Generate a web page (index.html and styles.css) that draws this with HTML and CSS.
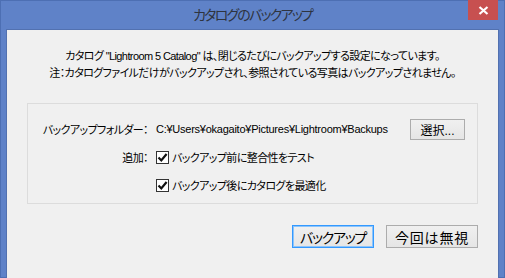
FILE: index.html
```html
<!DOCTYPE html>
<html lang="ja">
<head>
    <meta charset="UTF-8">
    <title>カタログのバックアップ</title>
    <link rel="stylesheet" href="styles.css">
</head>
<body>
    <div class="window">
        <div class="titlebar">カタログのバックアップ</div>
        <button class="close-btn" aria-label="閉じる">
            <svg width="11" height="9" viewBox="0 0 11 9">
                <path d="M1.5 1 L9.5 8 M9.5 1 L1.5 8" stroke="#fff" stroke-width="2.2" fill="none"/>
            </svg>
        </button>
        <div class="client">
            <p class="message">カタログ "Lightroom 5 Catalog" は、閉じるたびにバックアップする設定になっています。</p>
            <p class="message">注：カタログファイルだけがバックアップされ、参照されている写真はバックアップされません。</p>

            <div class="group">
                <div class="label">バックアップフォルダー：</div>
                <div class="path">C:¥Users¥okagaito¥Pictures¥Lightroom¥Backups</div>
                <button class="btn btn-small">選択...</button>

                <div class="label">追加：</div>
                <label class="check wide">
                    <span class="box">
                        <svg width="11" height="11" viewBox="0 0 11 11">
                            <path d="M1.5 5.5 L4.3 8.4 L9.6 2" stroke="#111" stroke-width="2.2" fill="none"/>
                        </svg>
                    </span>
                    バックアップ前に整合性をテスト
                </label>

                <div class="label"></div>
                <label class="check wide">
                    <span class="box">
                        <svg width="11" height="11" viewBox="0 0 11 11">
                            <path d="M1.5 5.5 L4.3 8.4 L9.6 2" stroke="#111" stroke-width="2.2" fill="none"/>
                        </svg>
                    </span>
                    バックアップ後にカタログを最適化
                </label>
            </div>

            <div class="actions">
                <button class="btn btn-default">バックアップ</button>
                <button class="btn btn-skip">今回は無視</button>
            </div>
        </div>
    </div>
</body>
</html>
```

FILE: styles.css
```css
body {
    margin: 0;
    font-family: "Liberation Sans", "Noto Sans CJK JP", sans-serif;
    font-feature-settings: "palt";
    background: #5f82c8;
}
.window {
    position: relative;
    width: 505px;
    height: 278px;
    box-sizing: border-box;
    border: 1px solid #4d6fb3;
    padding: 0 5px 6px 5px;
    background: #5f82c8;
}
.titlebar {
    height: 28px;
    line-height: 28px;
    text-align: center;
    font-size: 14px;
    letter-spacing: -1.8px;
    color: #2e3440;
}
.close-btn {
    position: absolute;
    top: -1px;
    right: 6px;
    width: 30px;
    height: 20px;
    padding: 0;
    border: none;
    background: #c75050;
    display: flex;
    align-items: center;
    justify-content: center;
}
.client {
    height: 240px;
    border: 1px solid #5271b0;
    background: #f0f0f0;
    padding: 18px 20px 0 20px;
    color: #000;
}
.message {
    margin: 0;
    font-size: 11px;
    letter-spacing: -0.6px;
    line-height: 17px;
    text-align: center;
    white-space: nowrap;
}
.group {
    margin-top: 21px;
    border: 1px solid #dcdcdc;
    padding: 14px 12px 7px 0;
    display: grid;
    grid-template-columns: 120px 1fr auto;
    grid-auto-rows: 22px;
    column-gap: 8px;
    row-gap: 6px;
    align-items: center;
    font-size: 11px;
    letter-spacing: -0.6px;
}
.label {
    text-align: right;
    white-space: nowrap;
}
.path {
    white-space: nowrap;
    letter-spacing: -0.25px;
}
.check {
    display: flex;
    align-items: center;
    gap: 2px;
    white-space: nowrap;
}
.check.wide {
    grid-column: 2 / 4;
}
.box {
    width: 11px;
    height: 11px;
    border: 1px solid #333;
    background: #fff;
    display: flex;
    margin-right: 1px;
}
.btn {
    font-family: inherit;
    font-feature-settings: "palt";
    color: #000;
    background: linear-gradient(180deg, #f0f0f0, #e5e5e5);
    border: 1px solid #acacac;
    padding: 0;
}
.btn-small {
    width: 55px;
    height: 21px;
    font-size: 12px;
    letter-spacing: 0;
}
.actions {
    display: flex;
    justify-content: flex-end;
    gap: 12px;
    margin-top: 21px;
}
.btn-default,
.btn-skip {
    height: 23px;
    font-size: 14px;
}
.btn-default {
    width: 82px;
    letter-spacing: -1.3px;
    border-color: #3399ff;
    box-shadow: inset 0 0 0 1px #8cc4fb;
}
.btn-skip {
    width: 92px;
    letter-spacing: 0.8px;
}
```
